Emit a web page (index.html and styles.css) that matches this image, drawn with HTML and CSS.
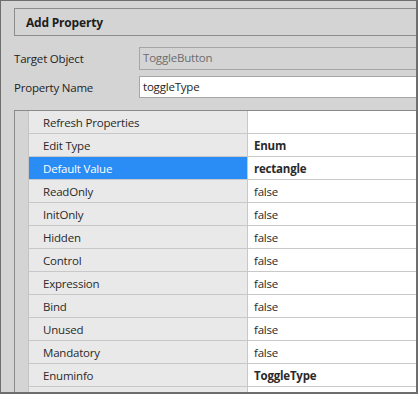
FILE: index.html
```html
<!DOCTYPE html>
<html>
  <head>
    <link rel="stylesheet" href="styles.css">
  </head>
  <body>
    <div class="dialog">
      <div class="dialog-title">Add Property</div>
      <div class="form-row">
        <label class="form-label">Target Object</label>
        <div class="form-input disabled">ToggleButton</div>
      </div>
      <div class="form-row second">
        <label class="form-label">Property Name</label>
        <div class="form-input">toggleType</div>
      </div>
      <div class="prop-grid">
        <div class="prop-gutter"></div>
        <div class="prop-rows">
          <div class="prop-row"><div class="prop-name">Refresh Properties</div><div class="prop-value"></div></div>
          <div class="prop-row"><div class="prop-name">Edit Type</div><div class="prop-value bold">Enum</div></div>
          <div class="prop-row selected"><div class="prop-name">Default Value</div><div class="prop-value bold">rectangle</div></div>
          <div class="prop-row"><div class="prop-name">ReadOnly</div><div class="prop-value">false</div></div>
          <div class="prop-row"><div class="prop-name">InitOnly</div><div class="prop-value">false</div></div>
          <div class="prop-row"><div class="prop-name">Hidden</div><div class="prop-value">false</div></div>
          <div class="prop-row"><div class="prop-name">Control</div><div class="prop-value">false</div></div>
          <div class="prop-row"><div class="prop-name">Expression</div><div class="prop-value">false</div></div>
          <div class="prop-row"><div class="prop-name">Bind</div><div class="prop-value">false</div></div>
          <div class="prop-row"><div class="prop-name">Unused</div><div class="prop-value">false</div></div>
          <div class="prop-row"><div class="prop-name">Mandatory</div><div class="prop-value">false</div></div>
          <div class="prop-row"><div class="prop-name">Enuminfo</div><div class="prop-value bold">ToggleType</div></div>
          <div class="prop-row"><div class="prop-name"></div><div class="prop-value"></div></div>
        </div>
      </div>
    </div>
  </body>
</html>
```

FILE: styles.css
```css
html, body {
  margin: 0;
  padding: 0;
  background: #d4d4d4;
}
body {
  font: 11.5px/16px "Open Sans", "Noto Sans", sans-serif;
  letter-spacing: -0.2px;
  color: #222;
}
.dialog {
  box-sizing: border-box;
  width: 418px;
  height: 394px;
  border: 1px solid #6e6e6e;
  border-right-width: 2px;
  border-bottom-width: 2px;
  background: #d4d4d4;
  padding: 7px 0 0 13px;
  overflow: hidden;
}
.dialog-title {
  box-sizing: border-box;
  height: 28px;
  margin-right: -10px;
  border: 1px solid #8c8c8c;
  padding: 6px 0 0 11px;
  font-size: 12px;
  font-weight: bold;
  color: #1e1e1e;
}
.form-row {
  display: flex;
  align-items: center;
  margin-top: 11px;
  height: 23px;
}
.form-row.second {
  margin-top: 6px;
  height: 22px;
}
.form-label {
  width: 125px;
  flex: none;
  padding-top: 1px;
  color: #1e1e1e;
}
.form-input {
  box-sizing: border-box;
  flex: 1;
  height: 100%;
  margin-right: -10px;
  border: 1px solid #a6a6a6;
  background: #fff;
  padding: 2px 0 0 3px;
  color: #1e1e1e;
}
.form-input.disabled {
  background: #d4d4d4;
  color: #6d6d6d;
}
.prop-grid {
  display: flex;
  margin-top: 12px;
  margin-right: -10px;
  border-left: 1px solid #8a8a8a;
  border-top: 1px solid #8a8a8a;
}
.prop-gutter {
  width: 14px;
  flex: none;
  border-right: 1px solid #c4c4c4;
  box-sizing: border-box;
}
.prop-rows {
  flex: 1;
}
.prop-row {
  display: flex;
  height: 23px;
  box-sizing: border-box;
  border-bottom: 1px solid #c8c8c8;
}
.prop-name {
  width: 219px;
  flex: none;
  box-sizing: border-box;
  background: #e9e9e9;
  border-right: 1px solid #c8c8c8;
  padding: 4px 0 0 14px;
  color: #2a2a2a;
}
.prop-value {
  flex: 1;
  background: #fff;
  padding: 4px 0 0 6px;
  color: #2a2a2a;
}
.prop-value.bold {
  font-weight: bold;
}
.prop-row.selected .prop-name {
  background: #2a8cf5;
  color: #fff;
}
```
